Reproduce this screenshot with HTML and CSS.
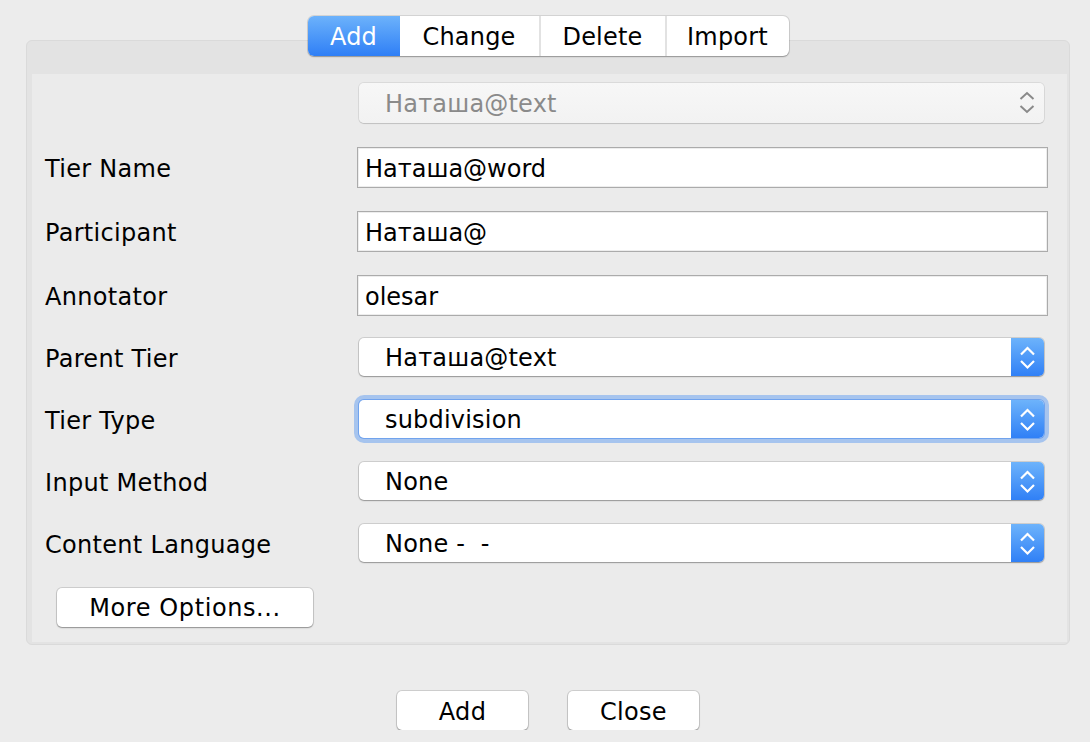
FILE: index.html
```html
<!DOCTYPE html>
<html>
<head>
<meta charset="utf-8">
<link rel="stylesheet" href="styles.css">
</head>
<body>
<div class="dialog">
  <div class="tabs">
    <div class="tab active">Add</div>
    <div class="tab change">Change</div>
    <div class="tab delete">Delete</div>
    <div class="tab import">Import</div>
  </div>
  <div class="panel">
    <div class="panel-inner">
      <div class="row">
        <div class="label"></div>
        <div class="control">
          <div class="combo disabled">
            <span class="combo-text">Наташа@text</span>
            <svg class="chev-gray" width="20" height="40" viewBox="0 0 20 40"><polyline points="3.5,16 10,10 16.5,16" fill="none" stroke="#8a8a8a" stroke-width="2"/><polyline points="3.5,23 10,29 16.5,23" fill="none" stroke="#8a8a8a" stroke-width="2"/></svg>
          </div>
        </div>
      </div>
      <div class="row gap-lg">
        <div class="label">Tier Name</div>
        <div class="control"><div class="field">Наташа@word</div></div>
      </div>
      <div class="row gap-lg">
        <div class="label">Participant</div>
        <div class="control"><div class="field">Наташа@</div></div>
      </div>
      <div class="row gap-lg">
        <div class="label">Annotator</div>
        <div class="control"><div class="field">olesar</div></div>
      </div>
      <div class="row">
        <div class="label">Parent Tier</div>
        <div class="control">
          <div class="combo">
            <span class="combo-text">Наташа@text</span>
            <span class="arrow"><svg width="33" height="38" viewBox="0 0 33 38"><polyline points="10,16.5 16.5,10 23,16.5" fill="none" stroke="#fff" stroke-width="2.2"/><polyline points="10,23 16.5,29.5 23,23" fill="none" stroke="#fff" stroke-width="2.2"/></svg></span>
          </div>
        </div>
      </div>
      <div class="row">
        <div class="label">Tier Type</div>
        <div class="control">
          <div class="combo focused">
            <span class="combo-text">subdivision</span>
            <span class="arrow"><svg width="33" height="38" viewBox="0 0 33 38"><polyline points="10,16.5 16.5,10 23,16.5" fill="none" stroke="#fff" stroke-width="2.2"/><polyline points="10,23 16.5,29.5 23,23" fill="none" stroke="#fff" stroke-width="2.2"/></svg></span>
          </div>
        </div>
      </div>
      <div class="row">
        <div class="label">Input Method</div>
        <div class="control">
          <div class="combo">
            <span class="combo-text">None</span>
            <span class="arrow"><svg width="33" height="38" viewBox="0 0 33 38"><polyline points="10,16.5 16.5,10 23,16.5" fill="none" stroke="#fff" stroke-width="2.2"/><polyline points="10,23 16.5,29.5 23,23" fill="none" stroke="#fff" stroke-width="2.2"/></svg></span>
          </div>
        </div>
      </div>
      <div class="row">
        <div class="label">Content Language</div>
        <div class="control">
          <div class="combo">
            <span class="combo-text">None -&nbsp;&nbsp;-</span>
            <span class="arrow"><svg width="33" height="38" viewBox="0 0 33 38"><polyline points="10,16.5 16.5,10 23,16.5" fill="none" stroke="#fff" stroke-width="2.2"/><polyline points="10,23 16.5,29.5 23,23" fill="none" stroke="#fff" stroke-width="2.2"/></svg></span>
          </div>
        </div>
      </div>
      <div class="row gap-lg">
        <button class="btn more">More Options...</button>
      </div>
    </div>
  </div>
  <div class="footer">
    <button class="btn foot">Add</button>
    <button class="btn foot">Close</button>
  </div>
</div>
</body>
</html>
```

FILE: styles.css
```css
html, body {
  margin: 0;
  padding: 0;
  background: #ececec;
}
body {
  font-family: "DejaVu Sans", "Liberation Sans", sans-serif;
  font-size: 24px;
  color: #000;
}
.dialog {
  padding: 16px 20px 0 26px;
}
.tabs {
  position: relative;
  z-index: 1;
  display: flex;
  width: max-content;
  margin: 0 auto;
  height: 40px;
  background: #fff;
  border-radius: 6px;
  box-shadow: 0 0 0 1px rgba(0,0,0,0.10), 0 1px 1.5px rgba(0,0,0,0.28);
}
.tab {
  height: 40px;
  line-height: 38px;
  padding-top: 2px;
  text-align: center;
  border-left: 2px solid #e2e2e2;
  box-sizing: border-box;
  letter-spacing: 0.2px;
}
.tab.active {
  border-left: none;
  border-radius: 6px 0 0 6px;
  color: #fff;
  background: linear-gradient(#6cb2fb, #2f7ff6);
  width: 92px;
}
.tab.change {
  border-left: none;
  width: 139px;
}
.tab.delete {
  width: 126px;
}
.tab.import {
  width: 124px;
}
.panel {
  margin-top: -16px;
  background: #e3e3e3;
  border: 1px solid #dadada;
  border-radius: 6px;
  padding: 33px 2px 2px 5px;
}
.panel-inner {
  background: #ebebeb;
  padding: 9px 19px 15px 13px;
  display: flex;
  flex-direction: column;
  gap: 22px;
}
.row {
  display: flex;
  align-items: center;
  height: 40px;
}
.row.gap-lg {
  margin-top: 2px;
}
.label {
  width: 312px;
  flex: none;
  line-height: 38px;
  padding-top: 4px;
  white-space: nowrap;
  letter-spacing: 0.3px;
}
.control {
  flex: 1;
  height: 40px;
  display: flex;
  align-items: center;
}
.field {
  flex: 1;
  height: 41px;
  box-sizing: border-box;
  background: #fff;
  border: 1px solid #ababab;
  box-shadow: inset 0 0 0 1px #ededed;
  padding-left: 7px;
  padding-top: 3px;
  line-height: 36px;
}
.combo {
  position: relative;
  flex: 1;
  margin: 0 4px 0 2px;
  height: 38px;
  background: #fff;
  border-radius: 5px;
  box-shadow: 0 0 0 1px rgba(0,0,0,0.12), 0 1px 1.5px rgba(0,0,0,0.28);
  display: flex;
  align-items: center;
}
.combo-text {
  flex: 1;
  padding-left: 26px;
  padding-top: 2px;
  white-space: pre;
  letter-spacing: 0.2px;
}
.combo.disabled {
  height: 40px;
  background: linear-gradient(#f7f7f7, #f2f2f2);
  box-shadow: 0 0 0 1px rgba(0,0,0,0.07), 0 1px 1px rgba(0,0,0,0.12);
  color: #8a8a8a;
}
.chev-gray {
  margin-right: 7px;
}
.arrow {
  width: 33px;
  height: 38px;
  flex: none;
  border-radius: 0 5px 5px 0;
  background: linear-gradient(#6db3fb, #3080f6);
}
.arrow svg {
  display: block;
}
.combo.focused {
  box-shadow: 0 0 0 1px rgba(60,130,235,0.5), 0 0 0 5px rgba(120,170,240,0.6);
}
.btn {
  font-family: "DejaVu Sans", "Liberation Sans", sans-serif;
  font-size: 24px;
  color: #000;
  background: #fff;
  border: none;
  border-radius: 5px;
  box-shadow: 0 0 0 1px rgba(0,0,0,0.12), 0 1px 1.5px rgba(0,0,0,0.3);
  height: 39px;
  padding: 2px 0 0;
  cursor: default;
  letter-spacing: 0.3px;
}
.btn.more {
  margin-left: 12px;
  width: 256px;
  letter-spacing: 0.6px;
}
.footer {
  display: flex;
  justify-content: center;
  gap: 40px;
  margin-top: 46px;
}
.btn.foot {
  width: 131px;
}
```
